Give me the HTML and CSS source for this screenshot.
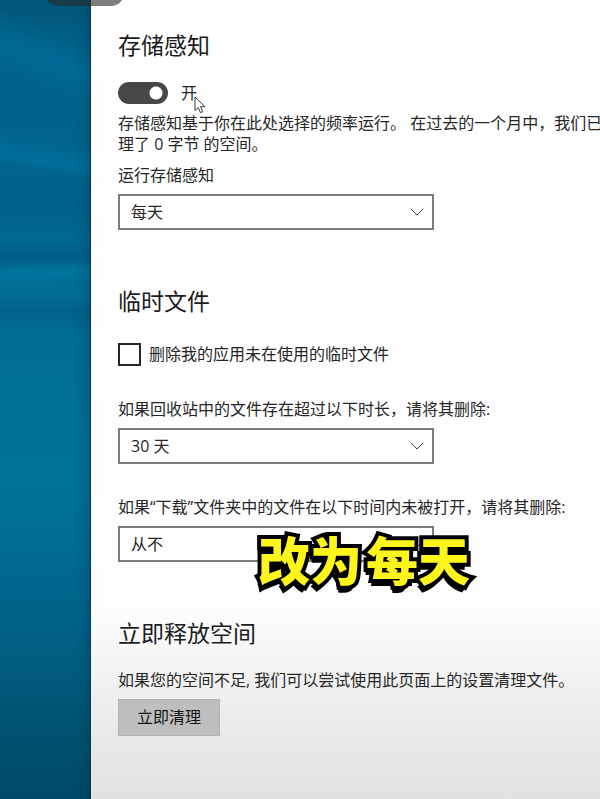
FILE: index.html
```html
<!DOCTYPE html>
<html lang="zh-CN">
<head>
<meta charset="utf-8">
<meta name="viewport" content="width=device-width, initial-scale=1">
<title>存储感知</title>
<link rel="stylesheet" href="styles.css">
</head>
<body>
<div class="desktop">
  <div class="wallpaper"></div>
  <main class="panel">
    <section class="section">
      <h2 class="title">存储感知</h2>
      <div class="toggle-row">
        <input class="toggle" type="checkbox" role="switch" id="sense" checked>
        <label for="sense" class="toggle-label">开</label>
        <svg class="cursor" viewBox="0 0 12 18" aria-hidden="true"><path d="M1 1v13.5l3.2-3 2.3 5.2 2.3-1-2.3-5h4.4z"/></svg>
      </div>
      <p class="text text-status">存储感知基于你在此处选择的频率运行。 在过去的一个月中，我们已清<br>理了 0 字节 的空间。</p>
      <div class="field">
        <label class="text" for="run">运行存储感知</label>
        <div class="select-box">
          <select id="run" class="select"><option>每天</option></select>
          <svg class="chevron" viewBox="0 0 14 8" aria-hidden="true"><path d="M.8 .8L7 7 13.2.8"/></svg>
        </div>
      </div>
    </section>

    <section class="section">
      <h2 class="title">临时文件</h2>
      <div class="check-row">
        <input class="check" type="checkbox" id="temp">
        <label class="text" for="temp">删除我的应用未在使用的临时文件</label>
      </div>
      <div class="field field-spaced">
        <label class="text" for="bin">如果回收站中的文件存在超过以下时长，请将其删除:</label>
        <div class="select-box">
          <select id="bin" class="select"><option>30 天</option></select>
          <svg class="chevron" viewBox="0 0 14 8" aria-hidden="true"><path d="M.8 .8L7 7 13.2.8"/></svg>
        </div>
      </div>
      <div class="field field-spaced">
        <label class="text" for="downloads">如果“下载”文件夹中的文件在以下时间内未被打开，请将其删除:</label>
        <div class="select-box">
          <select id="downloads" class="select"><option>从不</option></select>
          <svg class="chevron" viewBox="0 0 14 8" aria-hidden="true"><path d="M.8 .8L7 7 13.2.8"/></svg>
          <div class="caption"><span>改为</span><span>每天</span></div>
        </div>
      </div>
    </section>

    <section class="section">
      <h2 class="title">立即释放空间</h2>
      <div class="field">
        <p class="text">如果您的空间不足, 我们可以尝试使用此页面上的设置清理文件。</p>
        <button class="button" type="button">立即清理</button>
      </div>
    </section>
  </main>
  <div class="pill"></div>
</div>
</body>
</html>
```
FILE: styles.css
```css
* {
  box-sizing: border-box;
}

body {
  margin: 0;
  color: #262626;
  font: 16px/21px "Open Sans", "Noto Sans CJK SC", sans-serif;
}

.desktop {
  position: relative;
  display: grid;
  grid-template-columns: 91px minmax(0, 1fr);
  min-height: 100vh;
  overflow: hidden;
}

.wallpaper {
  border-right: 1px solid #08364a;
  background:
    linear-gradient(90deg, transparent 84%, rgba(0, 40, 65, 0.2)),
    linear-gradient(200deg, transparent 5%, rgba(0, 125, 170, 0.35) 9%, transparent 13%),
    linear-gradient(190deg, transparent 18%, rgba(0, 125, 170, 0.4) 21%, transparent 22%),
    linear-gradient(178deg, transparent 33%, rgba(0, 130, 165, 0.35) 34%, transparent 36%),
    linear-gradient(#00587a 0, #006189 7%, #00658e 20%, #00618a 26%, #006993 30%, #006089 32%, #006e96 34%, #006c93 37%, #00628a 39%, #006e92 42%, #007194 52%, #007399 60%, #006c93 68%, #00648a 76%, #005c7e 84%, #005270 92%, #004a66);
}

.panel {
  display: flex;
  flex-direction: column;
  gap: 56px;
  padding: 30px 0 60px 27px;
  overflow: hidden;
  white-space: nowrap;
  background: linear-gradient(#fff 0, #fdfdfd 76%, #f2f2f2 85%, #e8e8e8 93%, #e2e2e2);
}

.title {
  margin: 0 0 22px;
  color: #1c1c1c;
  font-size: 23px;
  font-weight: 400;
  line-height: 30px;
}

.text {
  margin: 0;
}

.toggle-row {
  position: relative;
  display: flex;
  align-items: center;
  gap: 13px;
  height: 22px;
}

.toggle {
  width: 50px;
  height: 22px;
  margin: 0;
  appearance: none;
  border-radius: 11px;
  background: radial-gradient(circle at 38px 11px, #fff 6px, #484647 7px);
}

.cursor {
  position: absolute;
  top: 14px;
  left: 76px;
  width: 12px;
  height: 18px;
  fill: #fff;
  stroke: #3a3a3a;
}

.text-status {
  margin: 9px 0 10px;
}

.field {
  display: flex;
  flex-direction: column;
  align-items: flex-start;
  gap: 8px;
}

.field-spaced {
  margin-top: 33px;
}

.select-box {
  position: relative;
  width: 316px;
}

.select {
  display: block;
  width: 100%;
  height: 36px;
  padding: 0 11px;
  appearance: none;
  border: 2px solid #7d7d7d;
  border-radius: 0;
  background: #fff;
  color: inherit;
  font: inherit;
}

.chevron {
  position: absolute;
  top: 14px;
  right: 10px;
  width: 14px;
  height: 8px;
  fill: none;
  stroke: #444;
  pointer-events: none;
}

.check-row {
  display: flex;
  align-items: center;
  gap: 8px;
  margin-top: 27px;
}

.check {
  width: 23px;
  height: 23px;
  margin: 0;
  appearance: none;
  border: 2px solid #262626;
  background: #fff;
}

.caption {
  position: absolute;
  top: 3px;
  left: 140px;
  display: flex;
  gap: 4px;
  color: #fdf51c;
  font-size: 52px;
  font-weight: 900;
  line-height: 64px;
  -webkit-text-stroke: 8px #000;
  paint-order: stroke fill;
  text-shadow: -1px 3px 0 #000, -2px 7px 0 #000;
}

.button {
  width: 102px;
  height: 37px;
  padding: 0;
  border: 1px solid #b2b2b2;
  background: #bebebe;
  color: #141414;
  font: inherit;
}

.pill {
  position: absolute;
  top: -20px;
  left: 45px;
  width: 79px;
  height: 26px;
  border-radius: 13px;
  background: rgba(40, 40, 40, 0.6);
}
```
